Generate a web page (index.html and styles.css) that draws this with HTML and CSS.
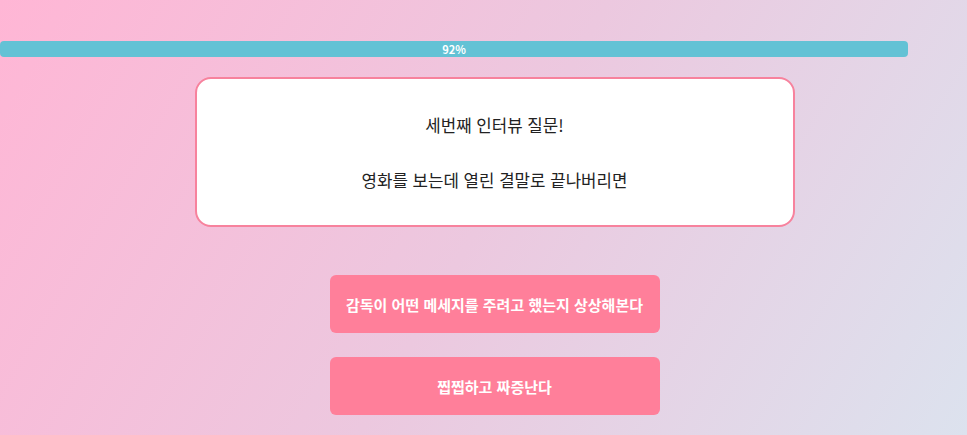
FILE: index.html
```html
<!DOCTYPE html>
<html lang="ko">
<head>
<meta charset="utf-8">
<link rel="stylesheet" href="styles.css">
</head>
<body>
<div class="page">
  <div class="progress"><span class="progress-label">92%</span></div>
  <div class="card">
    <p class="q">세번째 인터뷰 질문!</p>
    <p class="q">영화를 보는데 열린 결말로 끝나버리면</p>
  </div>
  <div class="answers">
    <button class="answer">감독이 어떤 메세지를 주려고 했는지 상상해본다</button>
    <button class="answer">찝찝하고 짜증난다</button>
  </div>
</div>
</body>
</html>
```

FILE: styles.css
```css
html, body {
  margin: 0;
  height: 100%;
}
body {
  background: linear-gradient(120deg, #ffb6d5 0%, #ecc8df 50%, #dce2ee 100%);
  font-family: "Noto Sans CJK KR", "Noto Sans", sans-serif;
  overflow: hidden;
}
.page {
  display: flex;
  flex-direction: column;
  align-items: center;
  padding-top: 41px;
  padding-left: 22px;
}
.progress {
  align-self: flex-start;
  margin-left: -22px;
  width: 908px;
  height: 16px;
  background: #63c2d5;
  border-radius: 4px;
  display: flex;
  align-items: center;
  justify-content: center;
}
.progress-label {
  color: #fff;
  font-size: 11px;
  font-weight: 700;
  line-height: 16px;
  font-family: "Noto Sans CJK KR", sans-serif;
}
.card {
  margin-top: 20px;
  width: 596px;
  height: 146px;
  background: #fff;
  border: 2px solid #f7829d;
  border-radius: 16px;
  display: flex;
  flex-direction: column;
  align-items: center;
  justify-content: center;
  gap: 31px;
}
.q {
  margin: 0;
  font-size: 16.8px;
  line-height: 24px;
  color: #222;
}
.answers {
  margin-top: 48px;
  display: flex;
  flex-direction: column;
  gap: 24px;
}
.answer {
  width: 330px;
  height: 58px;
  border: none;
  border-radius: 6px;
  background: #ff7f9a;
  color: #fff;
  font-family: "Noto Sans CJK KR", "Noto Sans", sans-serif;
  font-size: 15px;
  font-weight: 600;
  padding: 0;
}
```
